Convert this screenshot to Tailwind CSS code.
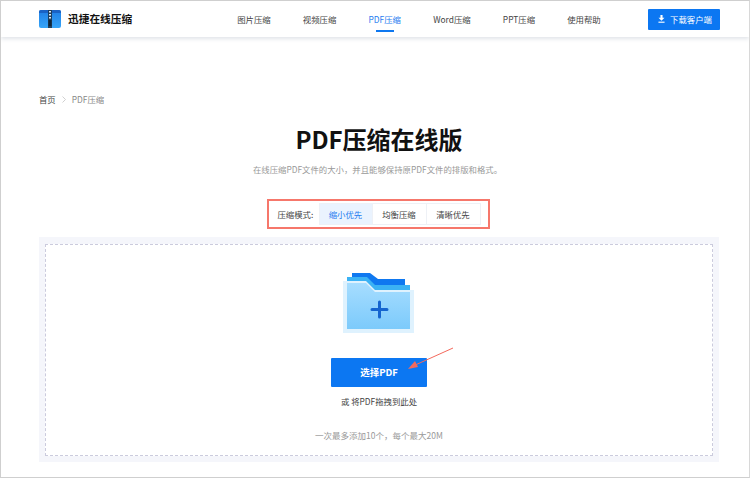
<!DOCTYPE html>
<html lang="zh-CN">

<head>
    <meta charset="UTF-8">
    <meta name="viewport" content="width=device-width, initial-scale=1.0">
    <title>PDF压缩在线版</title>
    <script src="https://cdn.jsdelivr.net/npm/@tailwindcss/browser@4"></script>
</head>

<body class="bg-white overflow-hidden font-['Noto_Sans_CJK_SC','Noto_Sans',sans-serif]">

    <div class="relative w-[750px] h-[478px] border border-[#cfcfcf] border-r-[#d8d8d8] bg-white overflow-hidden">

        <!-- NAVBAR -->
        <header class="flex items-center h-[36px] pl-[38px] pr-[29px] bg-white shadow-[0_2px_4px_rgba(70,90,120,0.16)]">
            <svg class="w-[22px] h-[18px]" viewBox="0 0 22 18">
                <defs>
                    <linearGradient id="logo" x1="0" y1="0" x2="0" y2="1">
                        <stop offset="0" stop-color="#1f7fe6" />
                        <stop offset="1" stop-color="#36a4f7" />
                    </linearGradient>
                </defs>
                <path d="M0 2 Q0 0 2 0 H20 Q22 0 22 2 V16 Q22 18 20 18 H2 Q0 18 0 16 Z" fill="url(#logo)" />
                <path d="M2 0 H9 V3 H0 V2 Q0 0 2 0 Z M13 0 H20 Q22 0 22 2 V3 H13 Z" fill="#1a62c4" />
                <rect x="9" y="0" width="4" height="18" fill="#1d3f5e" />
                <path d="M10 1h2v1.5h-2z M10 4h2v1.5h-2z M10 7h2v1.5h-2z" fill="#dfe9f3" />
                <rect x="9.5" y="10" width="3" height="6" fill="#0f2437" />
            </svg>
            <span class="ml-[7px] text-[10.7px] font-bold text-[#111]">迅捷在线压缩</span>

            <nav class="flex gap-[32.2px] ml-[105px] text-[8.4px] text-[#444]">
                <a>图片压缩</a>
                <a>视频压缩</a>
                <a class="relative text-[#1f7cf0]">PDF压缩
                    <span class="absolute left-[7px] right-[7px] top-[17px] h-[2px] bg-[#0f78f0]"></span>
                </a>
                <a>Word压缩</a>
                <a>PPT压缩</a>
                <a>使用帮助</a>
            </nav>

            <button class="flex items-center justify-center gap-[5px] ml-auto pl-[2px] w-[72px] h-[21px] rounded-[1px] bg-[#0c77f2] text-white text-[8.4px]">
                <svg class="w-[7px] h-[8px]" viewBox="0 0 8 9" fill="white">
                    <path d="M2.8 0h2.4v3.2H7.4L4 6.4 0.6 3.2h2.2z" />
                    <rect x="0.5" y="7.5" width="7" height="1.3" />
                </svg>
                下载客户端
            </button>
        </header>

        <!-- CONTENT -->
        <main class="flex flex-col ml-[38px] mr-[30px]">

            <!-- BREADCRUMB -->
            <div class="flex items-center h-[12px] mt-[56px] text-[8.4px] text-[#444]">
                <span>首页</span>
                <svg class="w-[4px] h-[7px] mx-[6px]" viewBox="0 0 4 7" fill="none" stroke="#c4c4c4" stroke-width="0.8">
                    <path d="M0.5 0.5 L3.5 3.5 L0.5 6.5" />
                </svg>
                <span class="text-[#888]">PDF压缩</span>
            </div>

            <!-- TITLE -->
            <h1 class="mt-[16px] text-center text-[24px] leading-[36px] font-bold text-[#111]">PDF压缩在线版</h1>
            <p class="mt-[6px] pr-[3px] text-center text-[8.4px] leading-[12px] text-[#999]">在线压缩PDF文件的大小，并且能够保持原PDF文件的排版和格式。</p>

            <!-- MODE PICKER -->
            <div class="flex items-center self-center mt-[24px] mr-[2px] w-[223px] h-[30px] pl-[9px] border-2 border-[#f6776b] text-[8.4px]">
                <span class="w-[41px] text-[#444]">压缩模式:</span>
                <a class="flex items-center justify-center w-[54px] h-[22px] bg-[#eaf3fe] border border-[#eef1f6] text-[#1f7cf0]">缩小优先</a>
                <a class="flex items-center justify-center w-[54px] h-[22px] border border-[#eef1f6] border-l-0 text-[#444]">均衡压缩</a>
                <a class="flex items-center justify-center w-[54px] h-[22px] border border-[#eef1f6] border-l-0 text-[#444]">清晰优先</a>
            </div>

            <!-- DROP ZONE -->
            <div class="mt-[8px] w-[680px] h-[225px] px-[6px] pt-[7px] pb-[6px] bg-[#f5f6fb]">
                <div class="flex flex-col items-center h-full bg-white border border-dashed border-[#cbcbdd]">
                    <svg class="mt-[27px] w-[72px] h-[61px]" viewBox="0 0 72 61">
                        <defs>
                            <linearGradient id="folder" x1="0" y1="0" x2="0" y2="1">
                                <stop offset="0" stop-color="#a6ddff" />
                                <stop offset="1" stop-color="#7ccafb" />
                            </linearGradient>
                        </defs>
                        <path d="M9 1 H27 L35 7 H62 V24 H9 Z" fill="#0f78f0" />
                        <path d="M4 5 H24 L32 13 H67 V30 H4 Z" fill="#3bb2f4" />
                        <path d="M0 9 H23 L32 18 H71 V61 H0 Z" fill="#dff2fe" />
                        <path d="M4 11 H23 L32 20 H67 V57 H4 Z" fill="url(#folder)" />
                        <path d="M35 30 a1.5 1.5 0 0 1 3 0 v6 h6 a1.5 1.5 0 0 1 0 3 h-6 v6 a1.5 1.5 0 0 1 -3 0 v-6 h-6 a1.5 1.5 0 0 1 0 -3 h6 z" fill="#1565cf" />
                    </svg>
                    <button class="mt-[25px] w-[96px] h-[29px] rounded-[1px] bg-[#0c77f2] text-white text-[9.5px] font-bold">选择PDF</button>
                    <p class="mt-[8px] text-[8.4px] leading-[12px] text-[#444]">或 将PDF拖拽到此处</p>
                    <p class="mt-[22px] text-[8.5px] leading-[12px] text-[#999]">一次最多添加10个，每个最大20M</p>
                </div>
            </div>
        </main>

        <!-- ANNOTATION ARROW -->
        <svg class="absolute left-0 top-0 w-[748px] h-[476px] pointer-events-none" viewBox="0 0 748 476">
            <path d="M452 347 L412 365" stroke="#f4695c" stroke-width="1" fill="none" />
            <path d="M407 368 L414 360 L417 366 Z" fill="#f4695c" />
        </svg>
    </div>

</body>

</html>
